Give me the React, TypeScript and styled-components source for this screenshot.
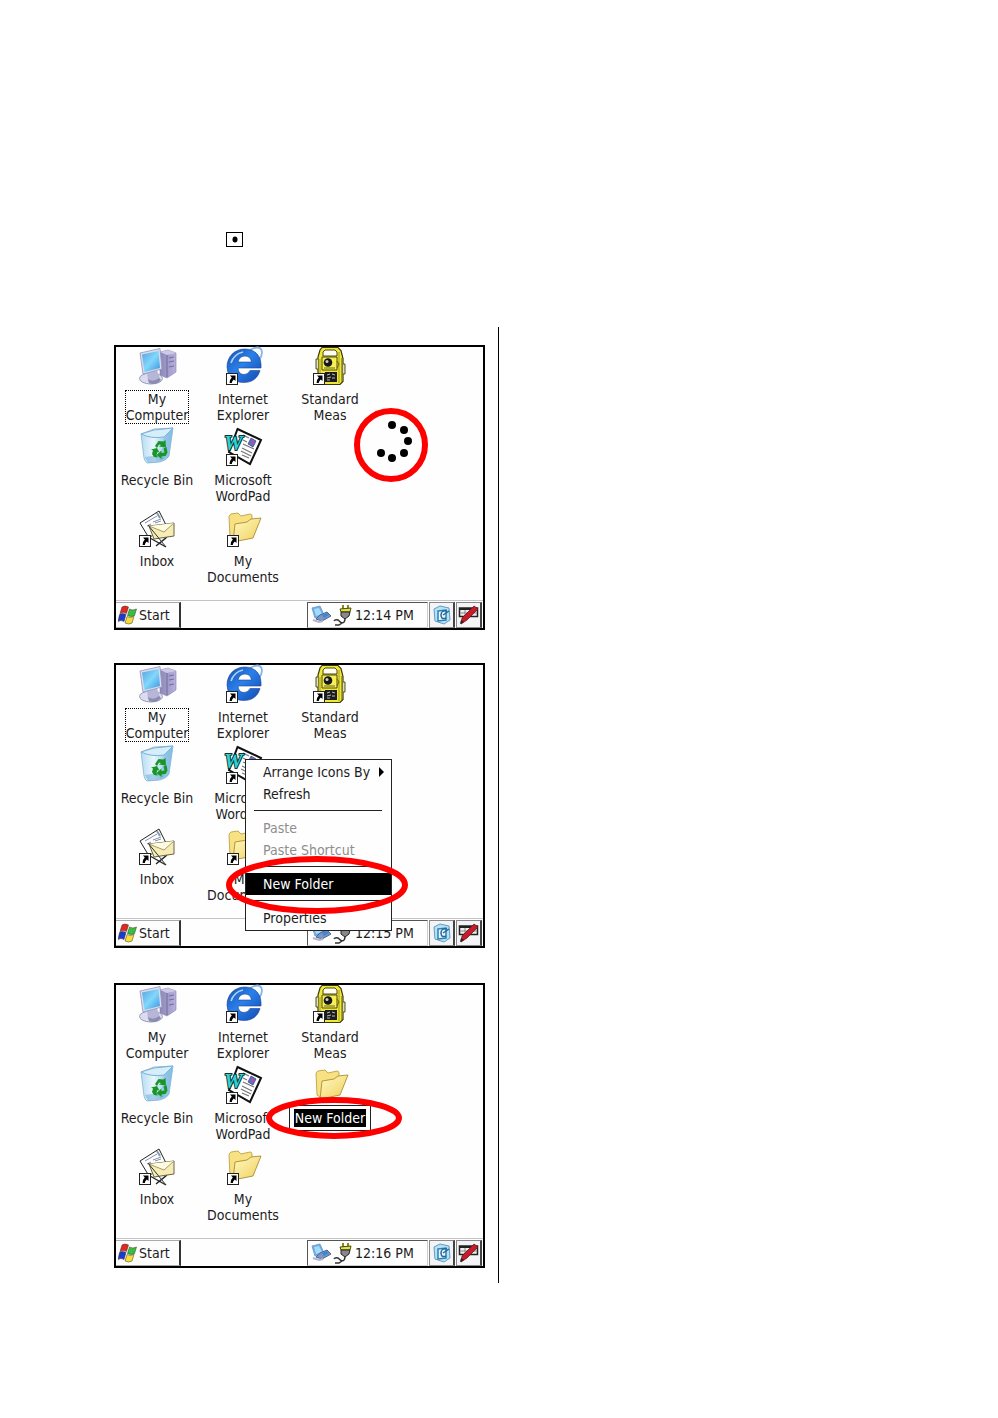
import React from 'react';
import styled, { createGlobalStyle } from 'styled-components';

const GlobalStyle = createGlobalStyle`
  * { box-sizing: border-box; }
  body { margin: 0; background: #fff; }
  button, input { font: inherit; color: inherit; margin: 0; }
`;

const Page = styled.main`
  min-height: 100vh;
  padding-top: 232px;
  background: #fff;
  color: #1c1c1c;
  font-family: 'DejaVu Sans Condensed', 'Noto Sans', sans-serif;
  font-size: 14px;
`;

const KeyHint = styled.div`
  height: 95px;
  padding-left: 226px;
  svg { display: block; }
`;

const Columns = styled.div`
  display: grid;
  grid-template-columns: 1fr 1fr;
`;

const Steps = styled.section`
  display: grid;
  grid-template-rows: 318px 320px auto;
  align-items: start;
  padding: 18px 13px 15px 114px;
  border-right: 1px solid #000;
`;

const Screen = styled.article`
  position: relative;
  display: flex;
  flex-direction: column;
  height: 285px;
  border: 2px solid #000;
  background: #fefefe;
`;

const Desktop = styled.div`
  flex: 1;
  display: grid;
  grid-template-columns: 82px 90px 84px;
  grid-template-rows: repeat(3, 79px);
  gap: 2px 0;
`;

const Shortcut = styled.button`
  display: flex;
  flex-direction: column;
  align-items: center;
  gap: 3px;
  padding: 0;
  border: 0;
  background: none;
  line-height: 16px;
  svg { display: block; flex: none; overflow: visible; }
`;

const Label = styled.span<{ $focused?: boolean }>`
  border: 1px ${p => (p.$focused ? 'dotted #000' : 'solid transparent')};
  white-space: pre;
`;

const Slot = styled.div`
  display: flex;
  flex-direction: column;
  align-items: center;
  svg { display: block; overflow: visible; }
`;

const RenameBox = styled.label`
  display: block;
  width: 82px;
  margin-top: -1px;
  padding: 3px 4px;
  border: 1px solid #222;
  background: #fff;
`;

const RenameInput = styled.input`
  display: block;
  width: 100%;
  height: 18px;
  padding: 0;
  border: 0;
  outline: 0;
  background: #000;
  color: #fff;
  text-align: center;
`;

const Taskbar = styled.footer`
  display: flex;
  gap: 1px;
  height: 28px;
  padding: 1px 1px 0 0;
  border-top: 1px solid #c4c4c8;
`;

const StartButton = styled.button`
  display: flex;
  align-items: center;
  gap: 2px;
  width: 65px;
  padding: 0 0 0 2px;
  border: 1px solid #aaa;
  border-right: 2px solid #333;
  border-left: 0;
  background: #fdfdfd;
`;

const Tray = styled.div`
  display: flex;
  align-items: center;
  gap: 2px;
  width: 121px;
  margin-left: auto;
  padding-left: 3px;
  border: 1px solid #555;
  border-right-color: #ccc;
  border-bottom-color: #ccc;
  white-space: nowrap;
`;

const TrayButton = styled.button`
  display: grid;
  place-items: center;
  width: 26px;
  padding: 0;
  border: 1px solid #888;
  border-right: 2px solid #444;
  background: #f4f4f6;
`;

const Menu = styled.div`
  position: absolute;
  left: 129px;
  top: 94px;
  width: 147px;
  padding: 1px 0;
  border: 1px solid #222;
  background: #fefefe;
`;

const MenuItem = styled.button<{ $active?: boolean }>`
  display: flex;
  align-items: center;
  justify-content: space-between;
  width: 100%;
  height: 22px;
  padding: 0 7px 0 17px;
  border: 0;
  background: ${p => (p.$active ? '#000' : 'none')};
  color: ${p => (p.$active ? '#fff' : '#1c1c1c')};
  white-space: nowrap;
  &:disabled { color: #8e8e8e; }
`;

const Separator = styled.hr`
  height: 1px;
  margin: 5px 9px 6px 8px;
  border: 0;
  background: #222;
`;

const Ring = styled.svg<{ $x: number; $y: number }>`
  position: absolute;
  left: ${p => p.$x}px;
  top: ${p => p.$y}px;
  pointer-events: none;
`;

const Arrow = ({ x = 3 }: { x?: number }) => (
  <g transform={`translate(${x} 26)`}>
    <rect x=".5" y=".5" width="11" height="11" fill="#fff" stroke="#222" />
    <path d="M4 2.500h5.500v5.500L7.800 6.500Q5.800 8 5.800 10H3.600Q3.200 7 5.800 4.500Z" fill="#000" />
  </g>
);

const ComputerIcon = () => (
  <svg width="40" height="40" viewBox="0 0 40 40">
    <defs>
      <linearGradient id="scr" x1="0" y1="0" x2="1" y2="1">
        <stop offset="0" stopColor="#5a9fe2" /><stop offset=".5" stopColor="#80d8fa" /><stop offset="1" stopColor="#3f92de" />
      </linearGradient>
      <linearGradient id="twr"><stop offset="0" stopColor="#8d87b8" /><stop offset="1" stopColor="#b8b1dc" /></linearGradient>
    </defs>
    <path d="M23 5 31 3l8 3v19l-9 6-7-3Z" fill="url(#twr)" stroke="#8580ac" strokeWidth=".6" />
    <path d="m23 5 8-2 8 3-9 2Z" fill="#cdc9e8" />
    <path d="M30 8v22M32 11l5-1M32 15l5-1M32 20l5-1" stroke="#716b9c" />
    <ellipse cx="14" cy="31.500" rx="11.500" ry="5.500" fill="#dcdcf0" stroke="#9a99bd" />
    <path d="m10 25 10-2 3 9q-5 6-12 2Z" fill="#b7b6d6" />
    <path d="M11 32q5 4 11-1l2 2q-5 6-12 3Z" fill="#8c8bb0" />
    <path d="m3 6 20-4.500 2 20.500L6 27Z" fill="#d9dbee" stroke="#8f97bb" strokeWidth=".8" />
    <path d="M5 7.500 21.500 4 23 21 7.500 25Z" fill="url(#scr)" />
  </svg>
);

const ExplorerIcon = () => (
  <svg width="40" height="40" viewBox="0 0 40 40">
    <defs>
      <linearGradient id="ie" x1="0" y1="0" x2="1" y2="1">
        <stop offset="0" stopColor="#1a4fae" /><stop offset=".45" stopColor="#2a80ea" /><stop offset="1" stopColor="#1448b0" />
      </linearGradient>
    </defs>
    <path d="M27 3Q36-2 38.500 3 40 8 36 13" fill="none" stroke="#86b6ec" strokeWidth="1.800" />
    <path fillRule="evenodd" d="M22 2C11 2 4 10 4 20q0 6 4 11 5 4.500 13 4.500c9 0 14-5 16-12H27q-2 4-6 4-5.500 0-6-6.500H38C39 9 32 2 22 2ZM15 15q1.500-6 7-6t6.500 6Z" fill="url(#ie)" stroke="#174795" strokeWidth=".6" />
    <path d="M8 16Q11 7 20 5" fill="none" stroke="#a5d3fa" strokeWidth="1.600" />
    <Arrow />
  </svg>
);

const StationIcon = () => (
  <svg width="40" height="40" viewBox="0 0 40 40">
    <path d="M12 .500h16l3 3 2 8v23l-3 3H11l-3-3V10l2-7Z" fill="#f0e838" stroke="#3a380c" strokeWidth="1.200" />
    <path d="M13 5 15 3h10l2 2v4H13Z" fill="#fdfdf0" stroke="#4c4910" />
    <path d="M12 10h15v13H12Z" fill="#f6ef58" stroke="#4c4910" />
    <path d="M10 12v14M29 5v31M31.500 11v24" stroke="#a59c1c" />
    <path d="M8 12H6v10h2M33 17h2v10h-2" fill="#ddd" stroke="#55520e" />
    <circle cx="18" cy="15.500" r="4.300" fill="#161616" /><circle cx="17" cy="14.500" r="1.500" fill="#ccc" />
    <path d="M14 21h11M27 14l2 3-2 4" fill="none" stroke="#6b6510" />
    <path d="M15 25h12v10H15Z" fill="#1d1d1d" />
    <path d="m17 28 3-1m2 0 3 1m-8 3 4-1m1 1 3 0m-8 2 3 0" stroke="#bbb" />
    <Arrow />
  </svg>
);

const RecycleIcon = () => (
  <svg width="40" height="40" viewBox="0 0 40 40">
    <defs>
      <linearGradient id="bin"><stop offset="0" stopColor="#b5dcf2" /><stop offset=".4" stopColor="#e9f7fd" /><stop offset="1" stopColor="#72afd9" /></linearGradient>
    </defs>
    <path d="M4 6 17 1l19-1-4 28q-2 4-9 6l-13 1q-2-1-3-5Z" fill="url(#bin)" stroke="#87b4d3" strokeWidth=".8" />
    <path d="M4 6 17 2l19-2-9 9Q14 11 4 6Z" fill="#d5eefa" stroke="#7db0d8" />
    <path d="m27 9 9-9-4 28-9 6Z" fill="#8bc2e6" opacity=".65" />
    <path d="m8 29 14-2 6 3-7 4-10 1Z" fill="#5c9fd0" opacity=".45" />
    <g fill="#189626">
      <path d="m18 18 3.500-5 5 .5 2-1.500.5 7.500-7-1 2-1.500-2-.5-2 3.500Z" />
      <path d="m26.500 20.500 3-1.500 1 5.500-2 3.500-4 .5v2.500l-5-4 5-4.500v2.500l3-.5Z" />
      <path d="m14 21.500 6-1.500 2.500 4.500-2-.5-1 3 1.500 2.500-4-.5-2-3 1-3.500Z" />
    </g>
  </svg>
);

const WordPadIcon = () => (
  <svg width="40" height="40" viewBox="0 0 40 40">
    <path d="M14.500 1 38 12 27 36 6 24Z" fill="#fff" stroke="#111" strokeWidth="2" />
    <path d="m20 7 6 3m-6 2 4 2m-4 2 11 5m-12-1 10 5m-11-2 10 5m-9-1 7 3" stroke="#777" strokeWidth="1.200" />
    <path d="m28 10 5 3-3 6-5-3Z" fill="#6b6bc4" stroke="#333a83" strokeWidth=".7" />
    <path d="m29 12 2 2-2 2Z" fill="#d94775" />
    <text x="1" y="22" fontFamily="Liberation Serif, serif" fontWeight="700" fontStyle="italic" fontSize="21" fill="#2fd2d2" stroke="#0b3435" strokeWidth="2" paintOrder="stroke">W</text>
    <Arrow />
  </svg>
);

const InboxIcon = () => (
  <svg width="40" height="40" viewBox="0 0 40 40">
    <path d="M3 14 22 2l7 14-17 13Z" fill="#fff" stroke="#222" />
    <path d="m8 14 12-7m-10 10 4-2m2-2 8-3m-6 4 6-2" stroke="#8291ab" />
    <path d="m20 4 3 5" stroke="#89a" strokeWidth="2" />
    <path d="m13 29 16 9m-9-2 10-8M19 37l10-8" stroke="#222" strokeWidth="1.300" />
    <path d="m12 17 25-3v13l-20 3Z" fill="#f5edb5" stroke="#696342" />
    <path d="m12 17 15 6 10-9" fill="#fffbe1" stroke="#a79b66" />
    <path d="m11 16 18 22" stroke="#333" />
    <Arrow x={2} />
  </svg>
);

const FolderIcon = ({ linked }: { linked?: boolean }) => (
  <svg width="40" height="40" viewBox="0 0 40 40">
    <defs>
      <linearGradient id="fold" x1="0" y1="0" x2="1" y2="1"><stop offset="0" stopColor="#fffac4" /><stop offset="1" stopColor="#f0cf5a" /></linearGradient>
    </defs>
    <path d="M6 8q0-2 2-3l7-1 3 3 9-2q2 0 2 2v18l-17 7-5-3Z" fill="#f7e182" stroke="#bea249" strokeWidth=".9" />
    <path d="m12 15 12-2 4-3 10-1-8 20-20 4Z" fill="url(#fold)" stroke="#a98d34" strokeWidth=".9" />
    {linked && <Arrow x={4} />}
  </svg>
);

const FlagIcon = () => (
  <svg width="19" height="20" viewBox="0 0 19 20" stroke="#332" strokeWidth=".5">
    <path d="M4 2q3-2 6.500 0L8.500 8.500q-3-2-6.500 0Z" fill="#e32620" />
    <path d="M11.500 4q3 2 7 0l-2 6.500q-3 2-7 0Z" fill="#35c043" />
    <path d="M1.500 9.500q3-2 6.500 0l-2 7q-3-2-6 0Z" fill="#2038d0" />
    <path d="M9 11.500q3 2 7 0l-2 6.500q-3 2-7 0Z" fill="#f5dd38" />
  </svg>
);

const NetworkIcon = () => (
  <svg width="20" height="20" viewBox="0 0 20 20">
    <path d="m1 3 8-2 4 9-9 3Z" fill="#66aee8" stroke="#7ba0cc" />
    <path d="m3 4 5-1 3 6-6 2Z" fill="#a4dafa" />
    <path d="m9 10 7-3 4 4-9 5-6-2Z" fill="#7c96c4" stroke="#4a6694" />
    <path d="m11 10 5-2 2 2-5 3Z" fill="#3f86d0" />
    <path d="m2 15 6 2 4-1" fill="none" stroke="#b4b4ce" strokeWidth="2" />
  </svg>
);

const PlugIcon = () => (
  <svg width="20" height="22" viewBox="0 0 20 22">
    <path d="m10 6 0-5m5 5 0-5" stroke="#8c8628" strokeWidth="2" />
    <path d="m7 5 11-1-1 4H8Z" fill="#e2e43c" stroke="#4b4a16" />
    <path d="M8 8h9l-1 4-4 3-4-3Z" fill="#888" stroke="#222" />
    <path d="M12 14q0 6-4 4.500L5 16q-3-1-4 1m8 2-3 2H2" fill="none" stroke="#333" strokeWidth="1.500" />
  </svg>
);

const DesktopIcon = () => (
  <svg width="20" height="20" viewBox="0 0 20 20">
    <path d="m2 4 6-3 9 2 1 12-6 4-9-3Z" fill="#b9e1f5" stroke="#5b9dc6" />
    <path d="m6 6 8-1v10l-8 1Z" fill="#e9f8fe" stroke="#2f7fb4" strokeWidth="1.500" />
    <path d="M15 6q-6-1-6 4t5 3m-3-3 6-4" fill="none" stroke="#25689a" strokeWidth="1.500" />
  </svg>
);

const PenIcon = () => (
  <svg width="21" height="20" viewBox="0 0 21 20">
    <path d="M1.500 3h18v8.500h-18Z" fill="#eee" stroke="#222" strokeWidth="1.500" />
    <path d="M2 4h17" stroke="#222" strokeWidth="2" />
    <path d="M2 8h17M7 5v6m6-6v6" stroke="#888" />
    <path d="m16 1 4 3L9 15l-6 4 1-6Z" fill="#c51c2b" stroke="#72101b" strokeWidth=".8" />
    <path d="m3 15-1 4 4-2Z" fill="#222" />
  </svg>
);

interface ScreenProps {
  name: string;
  time: string;
  focused?: boolean;
  created?: boolean;
  children?: React.ReactNode;
}

const DeviceScreen = ({ name, time, focused, created, children }: ScreenProps) => (
  <Screen aria-label={name}>
    <Desktop>
      <Shortcut><ComputerIcon /><Label $focused={focused}>{'My\nComputer'}</Label></Shortcut>
      <Shortcut><ExplorerIcon /><Label>{'Internet\nExplorer'}</Label></Shortcut>
      <Shortcut><StationIcon /><Label>{'Standard\nMeas'}</Label></Shortcut>
      <Shortcut><RecycleIcon /><Label>Recycle Bin</Label></Shortcut>
      <Shortcut><WordPadIcon /><Label>{'Microsoft\nWordPad'}</Label></Shortcut>
      {created ? (
        <Slot>
          <FolderIcon />
          <RenameBox><RenameInput aria-label="Folder name" defaultValue="New Folder" /></RenameBox>
        </Slot>
      ) : <span />}
      <Shortcut><InboxIcon /><Label>Inbox</Label></Shortcut>
      <Shortcut><FolderIcon linked /><Label>{'My\nDocuments'}</Label></Shortcut>
    </Desktop>
    <Taskbar>
      <StartButton><FlagIcon />Start</StartButton>
      <Tray><NetworkIcon /><PlugIcon /><time>{time}</time></Tray>
      <TrayButton aria-label="Desktop"><DesktopIcon /></TrayButton>
      <TrayButton aria-label="Input panel"><PenIcon /></TrayButton>
    </Taskbar>
    {children}
  </Screen>
);

const dots = [[38, 17], [50, 22], [54, 33], [50, 45], [38, 50], [27, 45]];

export default function App() {
  return (
    <Page>
      <GlobalStyle />
      <KeyHint>
        <svg width="17" height="15" viewBox="0 0 17 15">
          <rect x=".5" y=".5" width="16" height="14" fill="#fff" stroke="#000" />
          <ellipse cx="9" cy="7.500" rx="2.500" ry="3" />
        </svg>
      </KeyHint>
      <Columns>
        <Steps>
          <DeviceScreen name="Press and hold on the desktop" time="12:14 PM" focused>
            <Ring $x={238} $y={61} width="74" height="74" viewBox="0 0 74 74">
              <circle cx="37" cy="37" r="34" fill="none" stroke="#f00" strokeWidth="6" />
              {dots.map(([x, y]) => <circle key={`${x}-${y}`} cx={x} cy={y} r="4" />)}
            </Ring>
          </DeviceScreen>
          <DeviceScreen name="Desktop menu" time="12:15 PM" focused>
            <Menu role="menu">
              <MenuItem role="menuitem">
                Arrange Icons By
                <svg width="5" height="10" viewBox="0 0 5 10"><path d="M0 0 5 5 0 10Z" /></svg>
              </MenuItem>
              <MenuItem role="menuitem">Refresh</MenuItem>
              <Separator />
              <MenuItem role="menuitem" disabled>Paste</MenuItem>
              <MenuItem role="menuitem" disabled>Paste Shortcut</MenuItem>
              <Separator />
              <MenuItem role="menuitem" $active>New Folder</MenuItem>
              <Separator />
              <MenuItem role="menuitem">Properties</MenuItem>
            </Menu>
            <Ring $x={110} $y={191} width="182" height="59" viewBox="0 0 182 59">
              <ellipse cx="91" cy="29" rx="88" ry="26" fill="none" stroke="#f00" strokeWidth="6" />
            </Ring>
          </DeviceScreen>
          <DeviceScreen name="New folder created" time="12:16 PM" created>
            <Ring $x={150} $y={112} width="136" height="43" viewBox="0 0 136 43">
              <ellipse cx="68" cy="21" rx="65" ry="18" fill="none" stroke="#f00" strokeWidth="6" />
            </Ring>
          </DeviceScreen>
        </Steps>
      </Columns>
    </Page>
  );
}
